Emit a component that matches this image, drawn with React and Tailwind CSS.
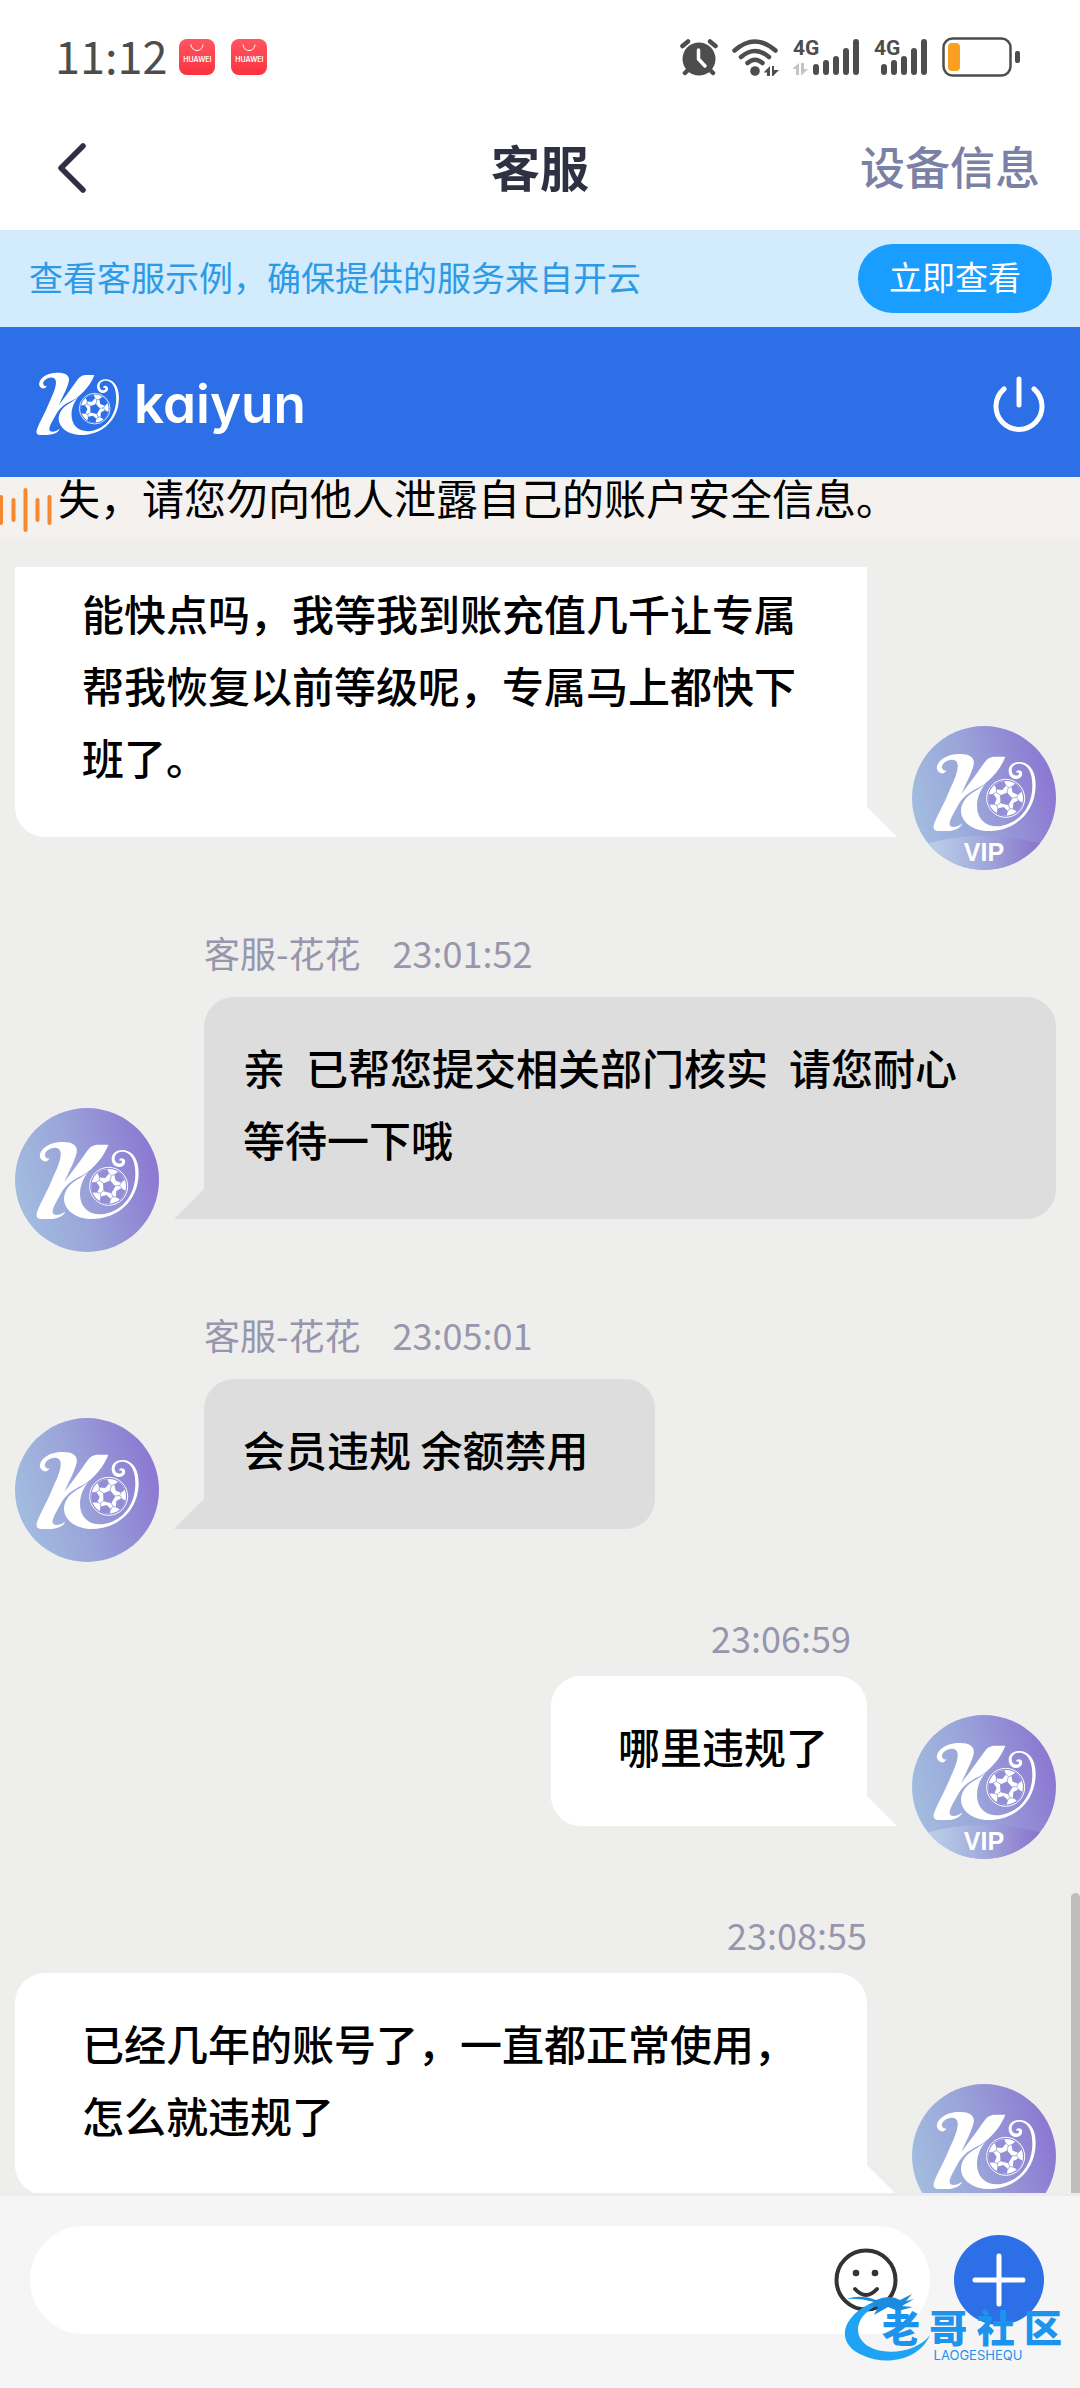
import { useState } from "react";

const notice = "失，请您勿向他人泄露自己的账户安全信息。";

const messages = [
    {
        id: 1,
        mine: true,
        cut: true,
        text: "能快点吗，我等我到账充值几千让专属帮我恢复以前等级呢，专属马上都快下班了。",
    },
    { id: 2, name: "客服-花花", time: "23:01:52", text: "亲\u2002已帮您提交相关部门核实\u2002请您耐心等待一下哦" },
    { id: 3, name: "客服-花花", time: "23:05:01", text: "会员违规 余额禁用" },
    { id: 4, mine: true, time: "23:06:59", short: true, text: "哪里违规了" },
    { id: 5, mine: true, pending: true, time: "23:08:55", text: "已经几年的账号了，一直都正常使用，怎么就违规了" },
];

function BrandMark({ className, patch }) {
    return (
        <svg viewBox="278 219 312 238" className={className} aria-hidden="true">
            <g fill="#fff">
                <path d="M318 270C314 284 296 284 290 268C286 246 316 222 356 222C390 221 406 234 399 258C392 284 374 316 363 342C386 312 412 276 432 248C442 234 452 230 466 230H495C484 262 452 302 418 322C386 336 366 352 352 378C336 406 322 430 330 438C338 444 352 440 366 431C358 446 342 453 316 453H292C280 453 277 444 282 430C292 404 310 374 324 340C338 308 354 276 352 254C350 238 334 236 318 244C306 250 302 260 306 266C310 272 314 272 318 270Z" />
                <path d="M438 308C420 328 410 352 410 378C410 420 440 444 482 438C540 428 576 378 576 318C576 282 566 258 544 252C526 248 514 258 514 272C515 286 528 290 535 284C538 280 534 276 528 278C526 272 534 268 541 272C550 278 546 294 530 297C514 298 504 286 505 270C507 252 524 244 542 246C572 250 587 280 586 318C584 398 524 455 438 453C394 450 362 424 362 392C363 366 380 346 410 330C422 323 430 316 438 308Z" />
            </g>
            <circle cx="496" cy="355" r="60" fill={patch} />
            <circle cx="496" cy="355" r="57" fill="none" stroke="#fff" strokeWidth="3" />
            <circle cx="496" cy="355" r="52" fill="#fff" />
            <g fill={patch}>
                {[0, 72, 144, 216, 288].map((deg) => (
                    <path key={deg} transform={`rotate(${deg + 50} 496 355)`} d="M480 305Q496 300 512 305L511 320L496 328L481 320Z" />
                ))}
                <path transform="rotate(14 496 357)" d="M496 337L515 351L508 373H484L477 351Z" />
            </g>
            <g stroke={patch} strokeWidth="2" fill="none">
                {[0, 72, 144, 216, 288].map((deg) => (
                    <path key={deg} transform={`rotate(${deg + 14} 496 355)`} d="M496 340V322L480 312M496 322L512 312" />
                ))}
            </g>
        </svg>
    );
}

function Avatar({ vip, label }) {
    return (
        <div className="relative h-36 w-36 shrink-0 overflow-hidden rounded-full bg-[linear-gradient(75deg,#a3bfe0_5%,#9aa4d9_45%,#8c78d2_90%)]">
            {vip && (
                <div className="absolute -inset-x-6 top-[110px] h-20 rounded-[50%] bg-[linear-gradient(90deg,#bcd2ea_20%,#a2a9dc_50%,#8568c8_85%)]" />
            )}
            <BrandMark
                patch="#928fd6"
                className={vip ? "absolute left-[21px] top-[27px] w-[104px]" : "absolute left-[21px] top-[33px] w-[104px]"}
            />
            {label && (
                <span className="absolute inset-x-0 top-[110px] text-center font-['Liberation_Sans',sans-serif] text-[25px] leading-8 font-bold text-white">
                    VIP
                </span>
            )}
        </div>
    );
}

function Message({ item }) {
    const { mine, cut, pending, name, time, short, text } = item;

    return (
        <li className={["flex items-end gap-[45px]", mine ? "justify-end" : "flex-row-reverse justify-end"].join(" ")}>
            <div className={["mb-[33px] flex min-w-0 flex-col", mine ? "items-end" : "items-start"].join(" ")}>
                {time && (
                    <p
                        className={[
                            "text-[36px] text-[#9896ad]",
                            mine ? "mb-[22px] leading-[34px]" : "mb-[21px] leading-[48px]",
                            short ? "mr-4" : "",
                        ].join(" ")}
                    >
                        {name && <span className="mr-8">{name}</span>}
                        <time>{time}</time>
                    </p>
                )}
                <div
                    className={[
                        "relative pb-[44px] text-[42px] leading-[72px] font-medium text-black",
                        mine ? "rounded-bl-[30px] bg-white pr-[39px] pl-[67px]" : "rounded-t-[30px] rounded-br-[30px] bg-[#dddddd] pr-[67px] pl-[39px]",
                        cut ? "pt-[10px]" : "pt-[34px]",
                        mine && !cut ? "rounded-t-[30px]" : "",
                    ].join(" ")}
                >
                    {text}
                    <svg
                        viewBox="0 0 30 30"
                        className={["absolute bottom-0 h-[30px] w-[30px]", mine ? "left-full" : "right-full -scale-x-100"].join(" ")}
                        aria-hidden="true"
                    >
                        <path d="M0 0L30 30H0Z" fill={mine ? "#fff" : "#ddd"} />
                    </svg>
                </div>
            </div>
            <Avatar vip={mine} label={mine && !pending} />
        </li>
    );
}

function StoreIcon() {
    return (
        <span className="relative flex h-9 w-9 items-center justify-center rounded-lg bg-linear-to-b from-[#ff5560] to-[#fb2f3d]">
            <svg viewBox="0 0 36 36" className="absolute inset-0" aria-hidden="true">
                <path d="M12 5.500a6 6 0 0 0 12 0" fill="none" stroke="#fff" strokeWidth="1" />
            </svg>
            <span className="pt-1 font-['Inter',sans-serif] text-[7px] leading-none font-semibold text-white">HUAWEI</span>
        </span>
    );
}

function Signal({ data }) {
    return (
        <span className={["relative h-9", data ? "w-[67px]" : "w-[54px]"].join(" ")}>
            <span className="absolute -top-1 left-0 font-['Roboto',sans-serif] text-[21px] leading-[26px] font-bold">4G</span>
            <svg viewBox={data ? "0 0 67 36" : "13 0 54 36"} className="h-9 w-full" aria-hidden="true">
                {data && (
                    <g fill="#c4c4c4">
                        <path d="M0 29L6 24V36H3V30H0Z" />
                        <path d="M8 24H11V30H15L9 36H8Z" />
                    </g>
                )}
                <path d="M23 28V33M33 24V33M43 20V33M53 12V33M63 3V33" stroke="#4d4d4d" strokeWidth="6" strokeLinecap="round" />
            </svg>
        </span>
    );
}

function StatusBar() {
    return (
        <div className="flex h-[106px] items-center justify-between pt-2 pr-[60px] pl-[55px] text-[#4d4d4d]">
            <div className="flex items-center">
                <span className="mr-3 pb-1 text-[45px] leading-[48px]">11:12</span>
                <span className="flex gap-4">
                    <StoreIcon />
                    <StoreIcon />
                </span>
            </div>
            <div className="flex items-center gap-[14px]">
                <svg viewBox="0 0 38 37" className="h-[37px] w-[38px]" aria-hidden="true">
                    <path d="M10 29L5 34M28 29L33 34M2.500 7L8 2.500M30 2.500L35.500 7" stroke="#4d4d4d" strokeWidth="4.500" strokeLinecap="round" />
                    <circle cx="19" cy="20" r="16.500" fill="#4d4d4d" />
                    <path d="M18.500 11V20L25 27" fill="none" stroke="#fff" strokeWidth="3.500" strokeLinecap="round" strokeLinejoin="round" />
                </svg>
                <svg viewBox="0 0 47 37" className="h-[37px] w-[47px]" aria-hidden="true">
                    <g fill="none" stroke="#4d4d4d" strokeWidth="4.500" strokeLinecap="round">
                        <path d="M2.500 11.500Q23 -6.500 43.500 11.500" />
                        <path d="M9 18Q23 6 37 18" />
                        <path d="M15.500 24Q23 17.500 30.500 24" />
                    </g>
                    <circle cx="23" cy="32" r="4.800" fill="#4d4d4d" />
                    <path d="M32 33L38 27V37H35V33.500H32ZM40 27H42V31H47L41 37H40Z" fill="#4d4d4d" />
                </svg>
                <Signal data />
                <Signal />
                <svg viewBox="0 0 78 40" className="h-10 w-[78px]" aria-hidden="true">
                    <rect x="1.500" y="1.500" width="67" height="37" rx="9" fill="none" stroke="#4d4d4d" strokeWidth="2.500" />
                    <rect x="6" y="6" width="12" height="28" rx="4" fill="#fa9f1f" />
                    <rect x="73" y="14" width="5" height="12" rx="2" fill="#4d4d4d" />
                </svg>
            </div>
        </div>
    );
}

function Watermark() {
    return (
        <div className="pointer-events-none absolute top-[97px] right-[18px] w-[218px] text-[#1c93ec]">
            <svg viewBox="0 0 218 70" className="w-full" aria-hidden="true">
                <path d="M30 9C-2 22 -10 50 18 62C44 74 76 66 86 42C76 56 50 63 30 56C8 48 8 24 34 12Z" fill="#1fa4f5" />
                <path d="M2 6Q18 1 32 7Q46 1 56 7L68 1L62 8L70 6L58 13L69 14L54 18L44 14L30 22L34 14L24 12L30 9Q16 5 2 6Z" fill="#1a8ce0" />
            </svg>
            <div className="absolute top-3 right-0 flex w-[180px] flex-col items-center">
                <p className="flex w-full justify-between text-[38px] leading-[42px] font-black">
                    <span>老</span>
                    <span>哥</span>
                    <span>社</span>
                    <span>区</span>
                </p>
                <p className="pl-3 font-['Inter',sans-serif] text-[13px] leading-[16px]">LAOGESHEQU</p>
            </div>
        </div>
    );
}

export default function App() {
    const [draft, setDraft] = useState("");

    return (
        <div className="flex h-screen flex-col overflow-hidden bg-[#eeeeec] font-['Noto_Sans_CJK_SC',sans-serif]">
            <header className="bg-white">
                <StatusBar />
                <div className="grid h-[124px] grid-cols-3 items-center px-10">
                    <button type="button" aria-label="返回" className="ml-3 w-10">
                        <svg viewBox="0 0 40 52" className="h-[52px] w-10" aria-hidden="true">
                            <path d="M31 4L9 26L31 48" fill="none" stroke="#2f3142" strokeWidth="5.500" strokeLinecap="round" strokeLinejoin="round" />
                        </svg>
                    </button>
                    <h1 className="pb-1 text-center text-[49px] leading-[60px] font-bold text-[#2f3142]">客服</h1>
                    <button type="button" className="pb-1 text-right text-[45px] leading-[60px] font-medium text-[#7b80a5]">
                        设备信息
                    </button>
                </div>
            </header>

            <div className="flex h-[97px] items-center justify-between bg-[#d2ebfd] pr-7 pl-[29px]">
                <p className="pb-1 text-[34px] text-[#2d9ae6]">查看客服示例，确保提供的服务来自开云</p>
                <button type="button" className="h-[69px] w-[194px] rounded-full bg-[#199dff] pb-1 text-[33px] text-white">
                    立即查看
                </button>
            </div>

            <div className="flex h-[150px] items-center justify-between bg-[#2c6fe6] pt-1 pr-[35px] pl-[36px]">
                <div className="flex items-center gap-[14px] text-white">
                    <BrandMark patch="#2c6fe6" className="w-[84px]" />
                    <span className="font-['Inter',sans-serif] text-[53px] leading-[60px] font-semibold [font-feature-settings:'cv11']">kaiyun</span>
                </div>
                <button type="button" aria-label="退出">
                    <svg viewBox="0 0 52 56" className="h-14 w-[52px]" aria-hidden="true">
                        <path d="M11 13A23 23 0 1 0 41 13M26 3V29" fill="none" stroke="#fff" strokeWidth="5" strokeLinecap="round" />
                    </svg>
                </button>
            </div>

            <div className="flex h-[60px] bg-[#f4f1ee]">
                <svg viewBox="0 0 58 60" className="h-[60px] w-[58px] shrink-0" aria-hidden="true">
                    <path d="M1 20V46M13.500 23V43M25.500 13V53M37.500 23V43M49.500 20V46" stroke="#f6882f" strokeWidth="4" strokeLinecap="round" />
                </svg>
                <p className="text-[42px] leading-[40px] whitespace-nowrap text-black">{notice}</p>
            </div>

            <main className="relative mt-[30px] min-h-0 flex-1 overflow-hidden">
                <ul className="flex flex-col gap-[58px] pr-6 pl-[15px]">
                    {messages.map((item) => (
                        <Message key={item.id} item={item} />
                    ))}
                </ul>
                <div className="absolute right-0 bottom-0 h-[300px] w-[9px] rounded-t-full bg-[#bebebe]" />
            </main>

            <footer className="relative flex h-[195px] shrink-0 items-start gap-6 border-t-[3px] border-[#ececec] bg-[#f5f5f5] pt-[30px] pr-9 pl-[30px]">
                <div className="flex h-[108px] flex-1 items-center rounded-full bg-white pr-8 pl-10">
                    <input
                        type="text"
                        aria-label="消息"
                        value={draft}
                        onChange={(event) => setDraft(event.target.value)}
                        className="min-w-0 flex-1 text-[42px] outline-none"
                    />
                    <button type="button" aria-label="表情">
                        <svg viewBox="0 0 64 64" className="h-16 w-16" aria-hidden="true">
                            <circle cx="32" cy="32" r="29.500" fill="none" stroke="#333" strokeWidth="4" />
                            <circle cx="22" cy="25" r="3.300" fill="#333" />
                            <circle cx="41" cy="25" r="3.300" fill="#333" />
                            <path d="M21 41Q32 53 43 41" fill="none" stroke="#333" strokeWidth="4" strokeLinecap="round" />
                        </svg>
                    </button>
                </div>
                <button type="button" aria-label="更多" className="mt-[9px] flex h-[90px] w-[90px] items-center justify-center rounded-full bg-[#2c6fe6]">
                    <svg viewBox="0 0 54 54" className="h-[54px] w-[54px]" aria-hidden="true">
                        <path d="M27 3V51M3 27H51" stroke="#fff" strokeWidth="5" strokeLinecap="round" />
                    </svg>
                </button>
                <Watermark />
            </footer>
        </div>
    );
}
